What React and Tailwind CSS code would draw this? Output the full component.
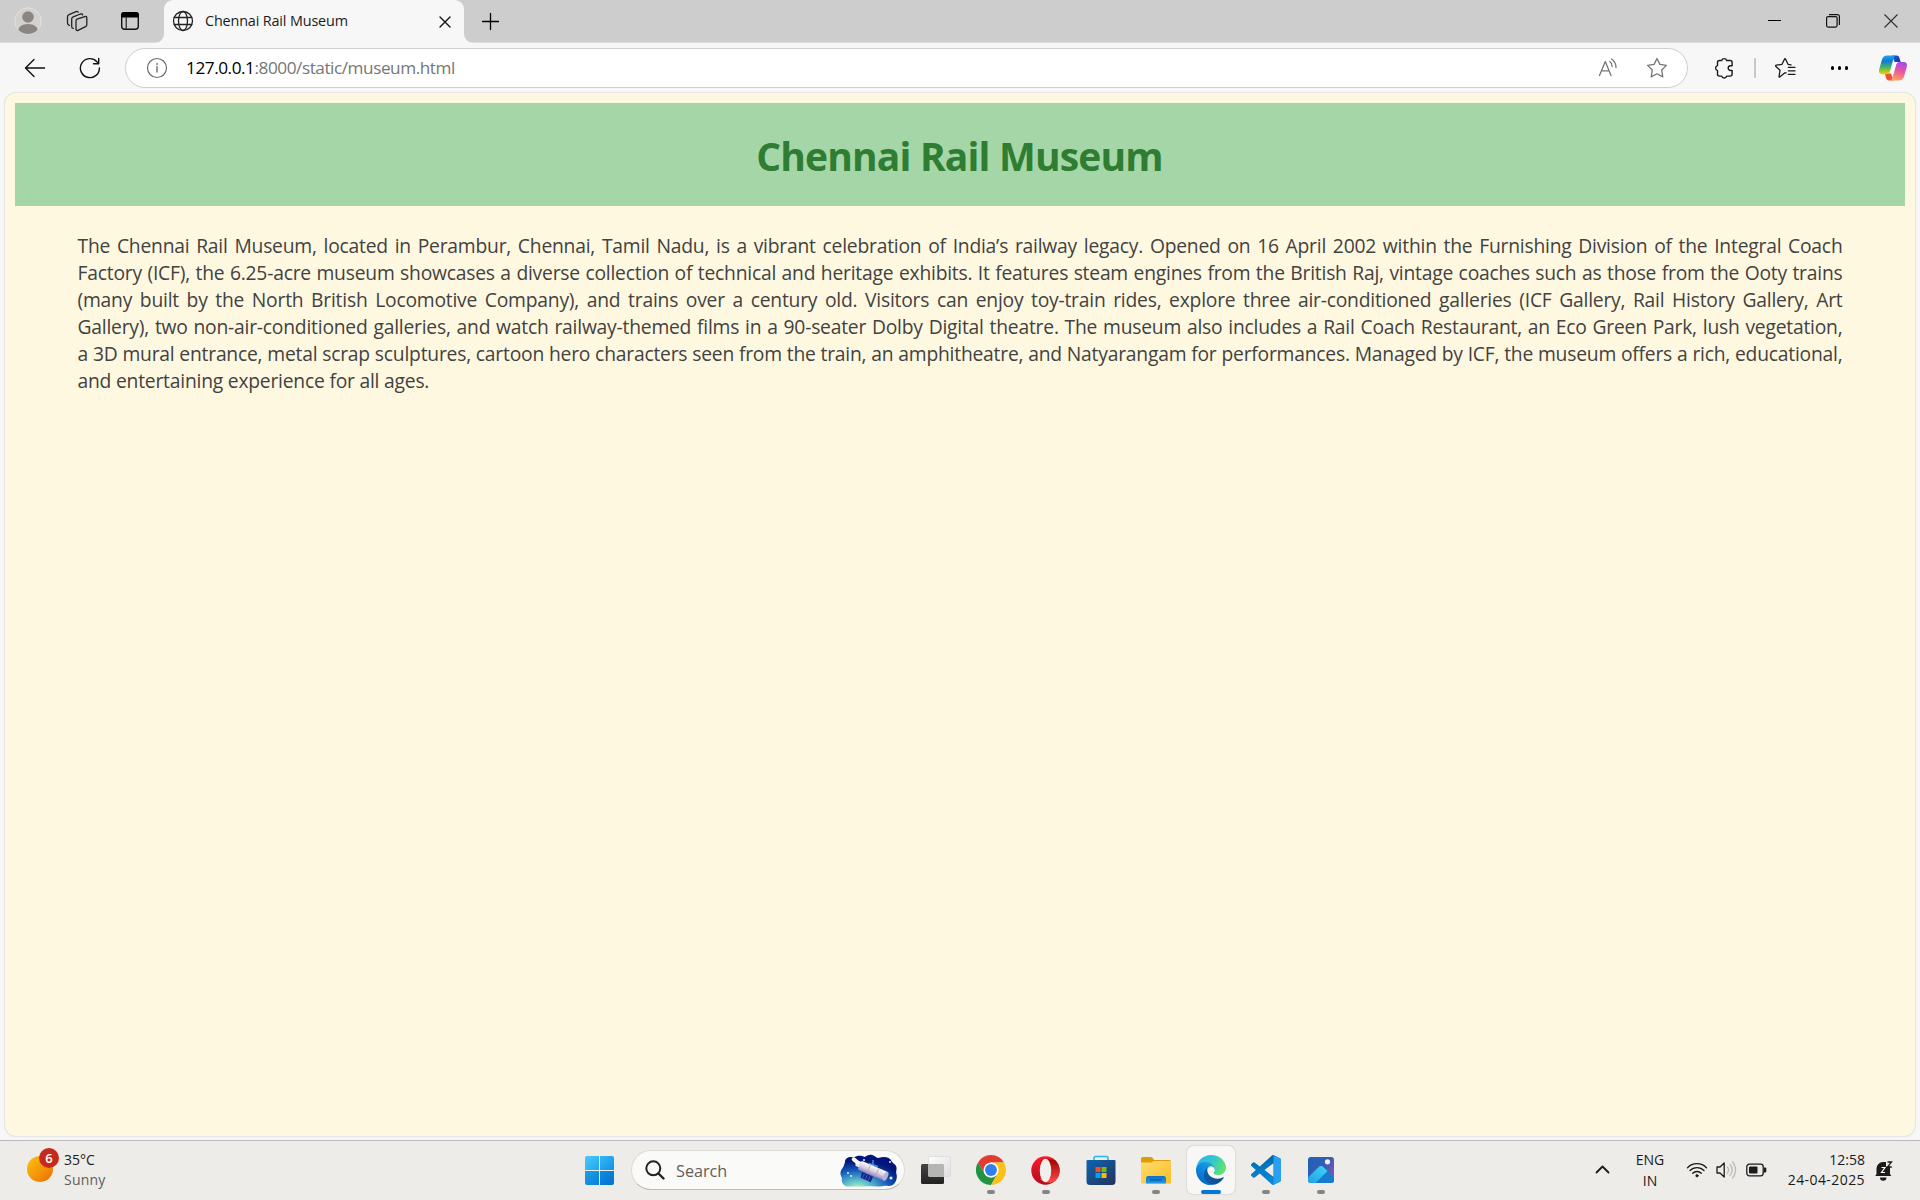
import React from 'react';

const line = { fill: 'none', stroke: 'currentColor', strokeLinecap: 'round', strokeLinejoin: 'round' };

function Avatar() {
  return (
    <svg width="28" height="28" viewBox="0 0 28 28" className="block">
      <defs>
        <clipPath id="av"><circle cx="14" cy="14" r="13" /></clipPath>
      </defs>
      <circle cx="14" cy="14" r="13.2" fill="#d3d1ce" stroke="#e2e1df" strokeWidth="1" />
      <g clipPath="url(#av)" fill="#8b8683">
        <circle cx="14" cy="10" r="5.8" />
        <path d="M4 25c0-5 3.500-8 10-8s10 3 10 8v3H4z" />
      </g>
    </svg>
  );
}

function Workspaces() {
  return (
    <svg width="22" height="22" viewBox="0 0 22 22" className="block text-[#222]" {...line} strokeWidth="1.300">
      <path d="M11 9.200 L18.800 6.600 Q20.800 6 20.800 8 V14.500 Q20.800 16 19.500 16.700 L12 20.300 Q10 21 10 19 V11 Q10 9.600 11 9.200z" />
      <path d="M7.400 18.300 Q5.700 18.300 5.700 16.400 V9 Q5.700 7.400 7.200 6.800 L14.500 4 Q16.300 3.500 16.600 4.800" />
      <path d="M3.500 15.300 Q1.500 15 1.500 13.300 V6.800 Q1.500 5.200 3 4.600 L10 1.600 Q11.800 1 12.200 2.400" />
    </svg>
  );
}

function TabActions() {
  return (
    <svg width="20" height="20" viewBox="0 0 20 20" className="block">
      <rect x="1.700" y="1.700" width="16.600" height="16.600" rx="3" fill="none" stroke="#111" strokeWidth="1.400" />
      <path d="M1 6.500V4a3 3 0 0 1 3-3h12a3 3 0 0 1 3 3v2.500z" fill="#000" />
      <path d="M6.200 6v12" stroke="#222" strokeWidth="1.200" />
    </svg>
  );
}

function Globe() {
  return (
    <svg width="22" height="22" viewBox="0 0 22 22" className="block text-[#222]" {...line} strokeWidth="1.300">
      <circle cx="11" cy="11" r="9.500" />
      <ellipse cx="11" cy="11" rx="4.500" ry="9.500" />
      <path d="M2.300 7.500h17.400M2.300 14.500h17.400" />
    </svg>
  );
}

function Star({ list }) {
  return (
    <svg width="22" height="22" viewBox="0 0 22 22" className="block" {...line} strokeWidth="1.300">
      {list ? (
        <>
          <path d="M12.200 15.800 L10.600 16 L5.700 20 Q4.900 20.300 5.100 19.300 L6 13.300 L1.700 9.200 Q1.300 8.300 2.200 8.200 L8 7.300 L10.600 2 Q11 1.300 11.500 2 L14 7.300 L17 7.800" />
          <path d="M14.300 10.300h6.700M14.300 13.800h6.700M14.300 17.300h6.700" />
        </>
      ) : (
        <path d="M11 1.500 L13.900 7.400 L20.400 8.400 L15.700 13 L16.800 19.900 L11 16.800 L5.200 19.900 L6.300 13 L1.600 8.400 L8.100 7.400z" />
      )}
    </svg>
  );
}

function ReadAloud() {
  return (
    <svg width="20" height="20" viewBox="0 0 20 20" className="block text-[#767676]" {...line} strokeWidth="1.300">
      <path d="M1.500 17.500 L7.300 3.500 L13 17.500 M3.500 12.800h7.600" />
      <path d="M11.800 3.500 Q14 5 14.200 8.500" />
      <path d="M13.500 1 Q18 4 18 9.500" />
    </svg>
  );
}

function Puzzle() {
  return (
    <svg width="22" height="22" viewBox="0 0 22 22" className="block text-[#1b1b1b]" {...line} strokeWidth="1.400">
      <path d="M6.500 3.500h2.200a2.600 2.600 0 0 1 5 0h3.400a2 2 0 0 1 2 2v3.200h-1.500a2.400 2.400 0 0 0 0 4.800h1.500v3.600a2 2 0 0 1-2 2h-3.400a2.600 2.600 0 0 1-5 0H6.500a2 2 0 0 1-2-2v-3.500a2.600 2.600 0 0 1 0-5V5.500a2 2 0 0 1 2-2z" />
    </svg>
  );
}

function Copilot() {
  return (
    <svg width="30" height="28" viewBox="0 0 30 28" className="block">
      <defs>
        <linearGradient id="cpA" x1="0" y1="0" x2="0" y2="1">
          <stop offset="0" stopColor="#20a4f3" /><stop offset=".3" stopColor="#0f78d6" />
          <stop offset=".6" stopColor="#3fb36a" /><stop offset="1" stopColor="#f2d000" />
        </linearGradient>
        <linearGradient id="cpB" x1=".6" y1="0" x2=".3" y2="1">
          <stop offset="0" stopColor="#a04df0" /><stop offset=".45" stopColor="#e8569c" />
          <stop offset="1" stopColor="#ffa55c" />
        </linearGradient>
        <linearGradient id="cpC" x1="0" y1="0" x2="1" y2="1">
          <stop offset="0" stopColor="#1a5fd8" /><stop offset="1" stopColor="#1536b4" />
        </linearGradient>
      </defs>
      <path d="M14 1.500h4.500c2 0 2.600 1.200 3.100 2.900l1.100 3.600h-6z" fill="url(#cpC)" />
      <path d="M16 26.500H11c-2 0-2.600-1.200-3.100-2.900L6.800 19.500h6z" fill="#ef5137" />
      <path d="M9.500 1.500h8.200c-1.300.6-1.800 1.800-2.300 3.500l-3.200 11.500c-.7 2.500-1.800 3.700-4.200 3.700H4.300C1.500 20.200.5 18 1.200 15.200L4 5.500C4.800 2.800 6.600 1.500 9.500 1.500z" fill="url(#cpA)" />
      <path d="M20.500 26.500h-8.200c1.300-.6 1.800-1.800 2.300-3.500l3.200-11.300c.7-2.500 1.800-3.700 4.200-3.700h3.700c2.800 0 3.800 2 3.100 4.800L26 22.500c-.8 2.700-2.600 4-5.500 4z" fill="url(#cpB)" />
      <path d="M16.800 8.800h2.200c-.7.800-1 1.700-1.300 2.800l-2.300 8.100h-2.700c.7-.8 1-1.700 1.300-2.700z" fill="#fff" />
    </svg>
  );
}

function SearchArt() {
  return (
    <svg width="57" height="33" viewBox="0 0 57 33" className="block">
      <defs>
        <radialGradient id="sky" cx=".3" cy="1.050" r=".9">
          <stop offset="0" stopColor="#c4f0bd" /><stop offset=".25" stopColor="#62c3cb" />
          <stop offset=".6" stopColor="#1560bd" /><stop offset=".95" stopColor="#04157a" />
        </radialGradient>
        <linearGradient id="tube" x1="0" y1="0" x2="0" y2="1">
          <stop offset="0" stopColor="#fffaf4" /><stop offset=".5" stopColor="#d9d2e6" /><stop offset="1" stopColor="#8e85c4" />
        </linearGradient>
      </defs>
      <path d="M5 8C5 3.500 10 2 14 3.500c3-2.500 8-2 10.500-.5 3-2 6-3.500 10-1 1.500 1 2.500 2.200 4.500 1.800C44 2 50 3 51.500 7c1 2.500 4.500 3 5 6.500.4 2.500-1 4 0 6.500 1.200 4-1 10-5 11.500-3 1-5-.3-8 .5-6 1.200-12 0-18 .5-6 .3-12 0-18 0C3 32 1 28 2 24 0 21 0 18 1.500 15.500 4 12.500 4 11 5 8z" fill="url(#sky)" />
      <path d="M33 6v9M29 9.500l9 3" stroke="#3c8fe0" strokeWidth="1.500" />
      <g transform="rotate(23 30 17)">
        <path d="M23 21h12v6H24z" fill="#152589" />
        <path d="M26 22v5M29 22v5M32 22v5" stroke="#577bd8" strokeWidth=".6" />
        <rect x="14" y="12" width="5" height="6" rx="1.500" fill="#eee9f5" />
        <rect x="18" y="11" width="29" height="9.500" rx="1.500" fill="url(#tube)" />
        <ellipse cx="46.500" cy="15.700" rx="2.200" ry="4.800" fill="#b9b3d6" />
        <path d="M37 11v9.500M28 11v9.500" stroke="#c9a3a0" strokeWidth=".8" />
        <rect x="9" y="11" width="9" height="4" rx="2" fill="#fff" transform="rotate(18 12 11)" />
      </g>
      <g fill="#dff1ff"><circle cx="24" cy="6" r="1" /><circle cx="8" cy="19" r="1" /><circle cx="50" cy="8" r="1" /><circle cx="51" cy="24" r="1.500" /><circle cx="11" cy="22" r="1" /></g>
    </svg>
  );
}

function TaskView() {
  return (
    <svg width="30" height="29" viewBox="0 0 30 29" className="block">
      <defs>
        <linearGradient id="tv" x1="0" y1="0" x2="1" y2="1"><stop offset="0" stopColor="#fdfdfd" /><stop offset="1" stopColor="#dededf" /></linearGradient>
        <linearGradient id="tvd" x1="0" y1="0" x2="0" y2="1"><stop offset="0" stopColor="#444" /><stop offset="1" stopColor="#222" /></linearGradient>
      </defs>
      <rect x="0" y="8" width="23" height="20" rx="1.500" fill="url(#tvd)" />
      <rect x="7.500" y=".5" width="22" height="20" rx="1.500" fill="url(#tv)" stroke="#d4d4d4" strokeWidth=".6" />
      <path d="M8 8h13.500a1.500 1.500 0 0 1 1.500 1.500V20.500H9A1 1 0 0 1 7.500 19V8z" fill="#b5b5b4" />
    </svg>
  );
}

function Chrome() {
  return (
    <svg width="30" height="30" viewBox="0 0 48 48" className="block">
      <path d="M24 12h20.780a24 24 0 0 0-41.570 0L13.600 30z" fill="#e33b2e" />
      <path d="M3.210 12A24 24 0 0 0 24 48l10.390-18A12 12 0 0 1 13.610 30z" fill="#229342" />
      <path d="M24 48a24 24 0 0 0 20.780-36H24a12 12 0 0 1 10.390 18z" fill="#fbc116" />
      <circle cx="24" cy="24" r="12" fill="#fff" />
      <circle cx="24" cy="24" r="9.500" fill="#327ef0" />
    </svg>
  );
}

function Opera() {
  return (
    <svg width="29" height="29" viewBox="0 0 29 29" className="-ml-px block">
      <defs>
        <linearGradient id="opA" x1="0" y1="0" x2="0" y2="1"><stop offset="0" stopColor="#ff1b2d" /><stop offset="1" stopColor="#b0091c" /></linearGradient>
        <linearGradient id="opB" x1="0" y1="0" x2="0" y2="1"><stop offset="0" stopColor="#9c0000" /><stop offset="1" stopColor="#ff4b4b" /></linearGradient>
      </defs>
      <circle cx="14.500" cy="14.500" r="14.200" fill="url(#opA)" />
      <path d="M9.500 5.500C12 2.500 16 1.500 19 3.500a14.200 14.200 0 0 1 5 .5 14.200 14.200 0 0 1 0 21c-4 2.700-10.500 2.300-14.500-1.500z" fill="url(#opB)" />
      <ellipse cx="14.500" cy="14.500" rx="5.700" ry="11.700" fill="#f1efec" />
    </svg>
  );
}

function Store() {
  return (
    <svg width="30" height="30" viewBox="0 0 30 30" className="-ml-px block">
      <defs><linearGradient id="st" x1="0" y1="0" x2="1" y2="1"><stop offset="0" stopColor="#0d66b0" /><stop offset="1" stopColor="#24315e" /></linearGradient></defs>
      <path d="M8 6V3.200A1.700 1.700 0 0 1 9.700 1.500h10.600A1.700 1.700 0 0 1 22 3.200V6" fill="none" stroke="#28b7ee" strokeWidth="1.600" />
      <path d="M.5 6a1 1 0 0 1 1-1h27a1 1 0 0 1 1 1v20.500a3.500 3.500 0 0 1-3.500 3.500H4a3.500 3.500 0 0 1-3.500-3.500z" fill="url(#st)" />
      <path d="M9.500 12h5v5h-5z" fill="#f25022" /><path d="M15.500 12h5v5h-5z" fill="#7fba00" />
      <path d="M9.500 18h5v5h-5z" fill="#00a4ef" /><path d="M15.500 18h5v5h-5z" fill="#ffb900" />
    </svg>
  );
}

function Folder() {
  return (
    <svg width="30" height="30" viewBox="0 0 30 30" className="block">
      <defs>
        <linearGradient id="fo" x1="0" y1="0" x2="1" y2="1"><stop offset="0" stopColor="#ffdd6c" /><stop offset="1" stopColor="#f9bd27" /></linearGradient>
        <linearGradient id="fb" x1="0" y1="0" x2="0" y2="1"><stop offset="0" stopColor="#0d70c9" /><stop offset="1" stopColor="#1f98e8" /></linearGradient>
      </defs>
      <path d="M0 3.500A1.500 1.500 0 0 1 1.500 2H9.500c1.500 0 2.500 1 3.500 3h15.500A1.500 1.500 0 0 1 30 6.500V12H0z" fill="#dc9d08" />
      <path d="M0 7.500h9.500C11 7.500 12 6 13.500 6H30v21.500a1 1 0 0 1-1 1H1a1 1 0 0 1-1-1z" fill="url(#fo)" />
      <path d="M5 28.500V23.500a2.500 2.500 0 0 1 2.500-2.500h15a2.500 2.500 0 0 1 2.500 2.500v5z" fill="url(#fb)" />
      <path d="M9 25h12" stroke="#0b4f96" strokeWidth="1" />
    </svg>
  );
}

function Edge() {
  return (
    <svg width="30" height="30" viewBox="0 0 256 256" className="block">
      <defs>
        <linearGradient id="eA" x1=".2" y1=".5" x2="1" y2=".5"><stop offset="0" stopColor="#0c5aa6" /><stop offset="1" stopColor="#114a8b" /></linearGradient>
        <linearGradient id="eB" x1=".8" y1=".2" x2=".3" y2="1"><stop offset="0" stopColor="#1b9de2" /><stop offset=".6" stopColor="#0b7ed8" /><stop offset="1" stopColor="#0267c4" /></linearGradient>
        <linearGradient id="eC" x1="0" y1=".3" x2="1" y2=".6"><stop offset="0" stopColor="#2fb4ee" /><stop offset=".5" stopColor="#32c6cf" /><stop offset="1" stopColor="#62e665" /></linearGradient>
      </defs>
      <path fill="url(#eA)" d="M231,190.500c-3.400,1.800-6.900,3.400-10.500,4.700c-11.500,4.300-23.600,6.500-35.900,6.500c-47.300,0-88.500-32.500-88.500-74.300c0.100-11.400,6.400-21.900,16.400-27.300c-42.800,1.800-53.800,46.400-53.800,72.500c0,73.900,68.100,81.400,82.800,81.400c7.900,0,19.800-2.300,27-4.600l1.300-0.400c27.600-9.500,51-28.100,66.600-52.800c1.200-1.900,0.600-4.300-1.200-5.500C233.900,190,232.300,189.900,231,190.500z" />
      <path fill="url(#eB)" d="M105.700,241.400c-8.900-5.500-16.600-12.800-22.700-21.300c-26.300-36-18.400-86.500,17.600-112.800c3.800-2.700,7.700-5.200,11.900-7.200c3.100-1.500,8.400-4.100,15.500-4c10.100,0.100,19.600,4.900,25.700,13c4,5.400,6.300,11.900,6.400,18.700c0-0.200,24.500-79.600-80-79.600c-43.900,0-80,41.700-80,78.200c-0.200,19.300,4,38.500,12.100,56c27.600,58.800,94.800,87.600,156.400,67.100C147.500,256.100,124.500,253.200,105.700,241.400z" />
      <path fill="url(#eC)" d="M152.300,148.900c-0.800,1-3.300,2.500-3.300,5.700c0,2.600,1.700,5.100,4.700,7.200c14.400,10,41.500,8.700,41.600,8.700c10.700,0,21.100-2.900,30.300-8.300c18.800-11,30.400-31.100,30.400-52.900c0.300-22.400-8-37.300-11.300-43.900C223.500,23.900,177.700,0,128,0C58,0,1,56.200,0,126.200c0.500-36.500,36.800-66,80-66c3.500,0,23.500,0.300,42,10.100c16.300,8.600,24.900,18.900,30.800,29.200c6.200,10.700,7.300,24.100,7.300,29.500C160.100,134.300,157.400,142.300,152.300,148.900z" />
    </svg>
  );
}

function Code() {
  const d = 'M23.150 2.587L18.210.210a1.494 1.494 0 0 0-1.705.290l-9.460 8.630-4.120-3.128a.999.999 0 0 0-1.276.057L.327 7.261A1 1 0 0 0 .326 8.740L3.899 12 .326 15.260a1 1 0 0 0 .001 1.479L1.650 17.940a.999.999 0 0 0 1.276.057l4.120-3.128 9.460 8.630a1.492 1.492 0 0 0 1.704.290l4.942-2.377A1.500 1.500 0 0 0 24 20.060V3.939a1.500 1.500 0 0 0-.850-1.352zm-5.146 14.861L10.826 12l7.178-5.448v10.896z';
  return (
    <svg width="30" height="30" viewBox="0 0 24 24" className="block">
      <defs>
        <clipPath id="vc"><rect x="18" y="0" width="6" height="24" /></clipPath>
        <linearGradient id="vg" x1="0" y1="0" x2="0" y2="1"><stop offset="0" stopColor="#0068ac" /><stop offset="1" stopColor="#0a8bdc" /></linearGradient>
      </defs>
      <path d={d} fill="url(#vg)" />
      <path d={d} fill="#27a0ef" clipPath="url(#vc)" />
    </svg>
  );
}

function Photos() {
  return (
    <svg width="26" height="26" viewBox="0 0 26 26" className="block">
      <defs>
        <linearGradient id="pA" x1="0" y1="0" x2="1" y2=".7"><stop offset="0" stopColor="#1c62b8" /><stop offset=".6" stopColor="#3a5cb4" /><stop offset="1" stopColor="#8256b5" /></linearGradient>
        <linearGradient id="pB" x1="0" y1="1" x2="1" y2="0"><stop offset="0" stopColor="#1b9be6" /><stop offset="1" stopColor="#3fd6f7" /></linearGradient>
        <clipPath id="pc"><rect width="26" height="26" rx="3" /></clipPath>
      </defs>
      <g clipPath="url(#pc)">
        <rect width="26" height="26" fill="url(#pA)" />
        <path d="M11.500 9.800q1.800-1.500 3.500 0L28 22.500V28H2z" fill="#167cce" />
        <path d="M-2 22.500 L11 9.800q2-1.500 4 0L19.500 14 5.500 28H-2z" fill="url(#pB)" />
        <circle cx="19.500" cy="4.800" r="2.600" fill="#f3f3fa" />
      </g>
    </svg>
  );
}

const apps = [
  { name: 'Chrome', icon: <Chrome />, running: true },
  { name: 'Opera', icon: <Opera />, running: true },
  { name: 'Store', icon: <Store /> },
  { name: 'Files', icon: <Folder />, running: true },
  { name: 'Edge', icon: <Edge />, active: true },
  { name: 'Code', icon: <Code />, running: true },
  { name: 'Photos', icon: <Photos />, running: true },
];

function TabBar() {
  return (
    <div className="flex h-[43px] items-center border-b border-[#dedede] bg-[#cdcdcd]">
      <div className="ml-[14px] w-7"><Avatar /></div>
      <div className="ml-6 w-[22px]"><Workspaces /></div>
      <div className="ml-8 w-5"><TabActions /></div>
      <svg width="9" height="9" viewBox="0 0 9 9" className="mt-auto -mb-px ml-[15px] block"><path d="M9 0v9H0a9 9 0 0 0 9-9z" fill="#f7f7f7" /></svg>
      <div className="-mb-px flex h-[43px] w-[300px] items-center rounded-t-[9px] bg-[#f7f7f7] pb-px">
        <div className="ml-2 w-[22px]"><Globe /></div>
        <div className="ml-[11px] text-[14.400px] leading-5 tracking-[-0.150px] whitespace-nowrap text-[#1b1b1b]">Chennai Rail Museum</div>
        <svg width="12" height="12" viewBox="0 0 12 12" className="mt-0.5 mr-[13px] ml-auto block text-[#111]" {...line} strokeWidth="1.400"><path d="M1 1l10 10M11 1L1 11" /></svg>
      </div>
      <svg width="9" height="9" viewBox="0 0 9 9" className="mt-auto -mb-px block"><path d="M0 0v9h9a9 9 0 0 1-9-9z" fill="#f7f7f7" /></svg>
      <svg width="19" height="19" viewBox="0 0 19 19" className="ml-2 block text-black" {...line} strokeWidth="1.300"><path d="M9.500 1.500v16M1.500 9.500h16" /></svg>
      <div className="mr-[22px] ml-auto flex items-center">
        <svg width="13" height="13" viewBox="0 0 13 13" className="block"><path d="M0 5.500h13" stroke="#000" strokeWidth="1" /></svg>
        <svg width="14" height="14" viewBox="0 0 14 14" className="ml-[45px] block" fill="none" stroke="#111" strokeWidth="1.200"><rect x=".6" y="2.600" width="10.500" height="10.500" rx="1.500" /><path d="M3 .6h8.400a2 2 0 0 1 2 2V11" /></svg>
        <svg width="14" height="14" viewBox="0 0 14 14" className="ml-[44px] block" stroke="#333" strokeWidth="1.200"><path d="M.5.5l13 13M13.500.5l-13 13" /></svg>
      </div>
    </div>
  );
}

function Toolbar() {
  return (
    <div className="flex h-[49px] items-center pt-px">
      <svg width="22" height="20" viewBox="0 0 22 20" className="ml-6 block text-[#111]" {...line} strokeWidth="1.400"><path d="M20.500 10H1.500M10 1.500L1.500 10l8.500 8.500" /></svg>
      <svg width="22" height="22" viewBox="0 0 22 22" className="ml-[33px] block text-[#111]" {...line} strokeWidth="1.400"><path d="M20.400 11a9.500 9.500 0 1 1-2.500-6.300l1.700 1.600M19.700 1.500v5.200h-5.200" /></svg>
      <div className="ml-[24px] flex h-10 w-[1563px] items-center rounded-full border border-[#cfcfcf] bg-white">
        <svg width="22" height="22" viewBox="0 0 22 22" className="ml-[20px] block text-[#6b6b6b]" {...line} strokeWidth="1.200"><circle cx="11" cy="11" r="9.500" /><path d="M11 9.800v5.200" strokeWidth="1.400" /><circle cx="11" cy="7" r=".6" fill="currentColor" strokeWidth=".6" /></svg>
        <div className="ml-[18px] text-[17.200px] leading-6 tracking-[-0.450px] whitespace-nowrap text-[#767676]"><span className="text-black">127.0.0.1</span>:8000/static/museum.html</div>
        <div className="mr-[19px] ml-auto flex items-center text-[#767676]">
          <div className="mr-[28px]"><ReadAloud /></div>
          <Star />
        </div>
      </div>
      <div className="ml-[25px]"><Puzzle /></div>
      <div className="ml-[19px] h-5 w-[1.500px] bg-[#c9c9c9]" />
      <div className="ml-[18px] text-[#1b1b1b]"><Star list /></div>
      <div className="ml-[35px] flex gap-[3.500px]">
        <i className="size-[3.500px] rounded-full bg-black" /><i className="size-[3.500px] rounded-full bg-black" /><i className="size-[3.500px] rounded-full bg-black" />
      </div>
      <div className="ml-[30px]"><Copilot /></div>
    </div>
  );
}

const lines = [
  'The Chennai Rail Museum, located in Perambur, Chennai, Tamil Nadu, is a vibrant celebration of India’s railway legacy. Opened on 16 April 2002 within the Furnishing Division of the Integral Coach',
  'Factory (ICF), the 6.25-acre museum showcases a diverse collection of technical and heritage exhibits. It features steam engines from the British Raj, vintage coaches such as those from the Ooty trains',
  '(many built by the North British Locomotive Company), and trains over a century old. Visitors can enjoy toy-train rides, explore three air-conditioned galleries (ICF Gallery, Rail History Gallery, Art',
  'Gallery), two non-air-conditioned galleries, and watch railway-themed films in a 90-seater Dolby Digital theatre. The museum also includes a Rail Coach Restaurant, an Eco Green Park, lush vegetation,',
  'a 3D mural entrance, metal scrap sculptures, cartoon hero characters seen from the train, an amphitheatre, and Natyarangam for performances. Managed by ICF, the museum offers a rich, educational,',
];

function Page() {
  return (
    <main className="mx-[5px] mt-px h-[1043px] rounded-[11px] bg-[#fff8e1] px-2.5 pt-2.5 shadow-[0_0_2px_rgba(0,0,0,0.250)]">
      <header className="flex h-[103px] items-center justify-center bg-[#a5d6a7]">
        <h1 className="pt-0.5 pr-px text-[39px] leading-none font-bold tracking-[-0.840px] text-[#2e7d32]">Chennai Rail Museum</h1>
      </header>
      <div className="mt-[26px] ml-[62.500px] w-[1765px] text-[19.300px] leading-[27px] tracking-[-0.220px] text-[#424242]">
        {lines.map((t) => (
          <p key={t} className="h-[27px] text-justify [text-align-last:justify]">{t}</p>
        ))}
        <p className="h-[27px]">and entertaining experience for all ages.</p>
      </div>
    </main>
  );
}

function Taskbar() {
  return (
    <footer className="mt-[4px] flex h-[60px] items-start border-t border-[#b9b9b9] bg-[#edece9] text-[14px] text-[#1b1b1b]">
      <div className="flex w-[585px]">
        <div className="relative mt-[15px] ml-[27px] size-[26px] rounded-full bg-linear-to-br from-[#fcc40a] to-[#ea6a06]">
          <span className="absolute -top-[8px] left-[12px] flex size-5 items-center justify-center rounded-full bg-[#c42b1c] text-[13px] leading-none font-semibold text-white">6</span>
        </div>
        <div className="mt-[9px] ml-[11px] leading-5">
          <div>35°C</div>
          <div className="tracking-[0.200px] text-[#5f5e5c]">Sunny</div>
        </div>
      </div>
      <div className="mt-[15px] grid size-[29px] grid-cols-2 gap-px">
        <i className="rounded-tl-[2px] bg-linear-to-br from-[#4cc9fb] to-[#1fa5ee]" />
        <i className="rounded-tr-[2px] bg-linear-to-br from-[#33b8f5] to-[#1391e3]" />
        <i className="rounded-bl-[2px] bg-linear-to-br from-[#1ba0ea] to-[#0b80d8]" />
        <i className="rounded-br-[2px] bg-linear-to-br from-[#118ce0] to-[#0271cf]" />
      </div>
      <div className="mt-[9px] ml-[17px] flex h-10 w-[274px] items-center rounded-full border border-[#dcdbd9] border-b-[#bdbcba] bg-[#fafaf8]">
        <svg width="20" height="20" viewBox="0 0 20 20" className="ml-[13px] block text-[#222]" {...line} strokeWidth="2"><circle cx="8.300" cy="8.300" r="7" /><path d="M13.500 13.500l5 5" strokeWidth="2.400" /></svg>
        <div className="ml-[11px] pt-px text-[16.200px] leading-6 text-[#5f5e5c]">Search</div>
        <div className="mr-[7px] ml-auto"><SearchArt /></div>
      </div>
      <div className="mt-[15px] ml-4 w-[30px]"><TaskView /></div>
      <div className="ml-[12.500px] flex">
        {apps.map((a) => (
          <div key={a.name} className="flex w-[55px] justify-center pt-[5px]">
            <div className={a.active ? 'relative flex size-12 items-center justify-center rounded-[6px] bg-[#f8f7f5] shadow-[0_0_1.500px_rgba(0,0,0,0.300)]' : 'relative flex size-12 items-center justify-center'}>
              {a.icon}
              {a.running && <span className="absolute bottom-0 left-5 h-1 w-2 rounded-full bg-[#868583]" />}
              {a.active && <span className="absolute bottom-0 left-[14px] h-1 w-5 rounded-full bg-[#0078d4]" />}
            </div>
          </div>
        ))}
      </div>
      <div className="mr-[27px] ml-auto flex">
        <svg width="15" height="9" viewBox="0 0 15 9" className="mt-[24px] block" {...line} strokeWidth="1.800"><path d="M1.500 7.500l6-6 6 6" /></svg>
        <div className="mt-[9px] ml-[25px] w-[30px] text-center leading-[20.500px]"><div>ENG</div><div>IN</div></div>
        <svg width="22" height="17" viewBox="0 0 22 17" className="mt-5 ml-[21px] block" {...line} strokeWidth="1.300"><path d="M1.500 6.700a13.300 13.300 0 0 1 19 0M4 9.500a9.800 9.800 0 0 1 14 0M6.700 12.300a6 6 0 0 1 8.600 0" /><circle cx="11" cy="14.700" r="1.300" fill="currentColor" strokeWidth=".5" /></svg>
        <svg width="22" height="18" viewBox="0 0 22 18" className="mt-5 ml-[7px] block" {...line} strokeWidth="1.300"><path d="M2 6h3l4.200-4v14L5 12H2z" /><g stroke="#bdbcba"><path d="M12.300 6a4.500 4.500 0 0 1 0 6M15 3.500a8 8 0 0 1 0 11M17.500 1a12 12 0 0 1 0 16" /></g></svg>
        <svg width="21" height="14" viewBox="0 0 21 14" className="mt-[22px] ml-[9px] block"><rect x=".8" y="1.200" width="16.400" height="11.600" rx="2.500" fill="none" stroke="#1b1b1b" strokeWidth="1.300" /><rect x="3" y="3.500" width="8.500" height="7" rx="1" fill="#1b1b1b" /><path d="M18 4.500h1.300a1 1 0 0 1 1 1v3a1 1 0 0 1-1 1H18z" fill="#1b1b1b" /></svg>
        <div className="mt-[9px] ml-[19px] w-[79px] text-right leading-5"><div>12:58</div><div className="tracking-[0.420px] whitespace-nowrap">24-04-2025</div></div>
        <svg width="18" height="21" viewBox="0 0 18 21" className="mt-[19px] ml-[10px] block" fill="#1b1b1b"><path d="M1.500 14V8.500a6.500 6.500 0 0 1 6.500-6.500H11v4.500h4V14l1.300 2H.3zM5 17.500h6.500a3.200 3.200 0 0 1-6.500 0z" /><path d="M6.500 7.500h3.500l-3.500 5h3.500" fill="none" stroke="#fff" strokeWidth="1.200" /><path d="M12.500 2h4l-4 5h4.300" fill="none" stroke="#1b1b1b" strokeWidth="1.300" /></svg>
      </div>
    </footer>
  );
}

export default function App() {
  return (
    <div className="h-[1200px] w-[1920px] overflow-hidden bg-[#f7f7f7] font-['Open_Sans',sans-serif]">
      <TabBar />
      <Toolbar />
      <Page />
      <Taskbar />
    </div>
  );
}
